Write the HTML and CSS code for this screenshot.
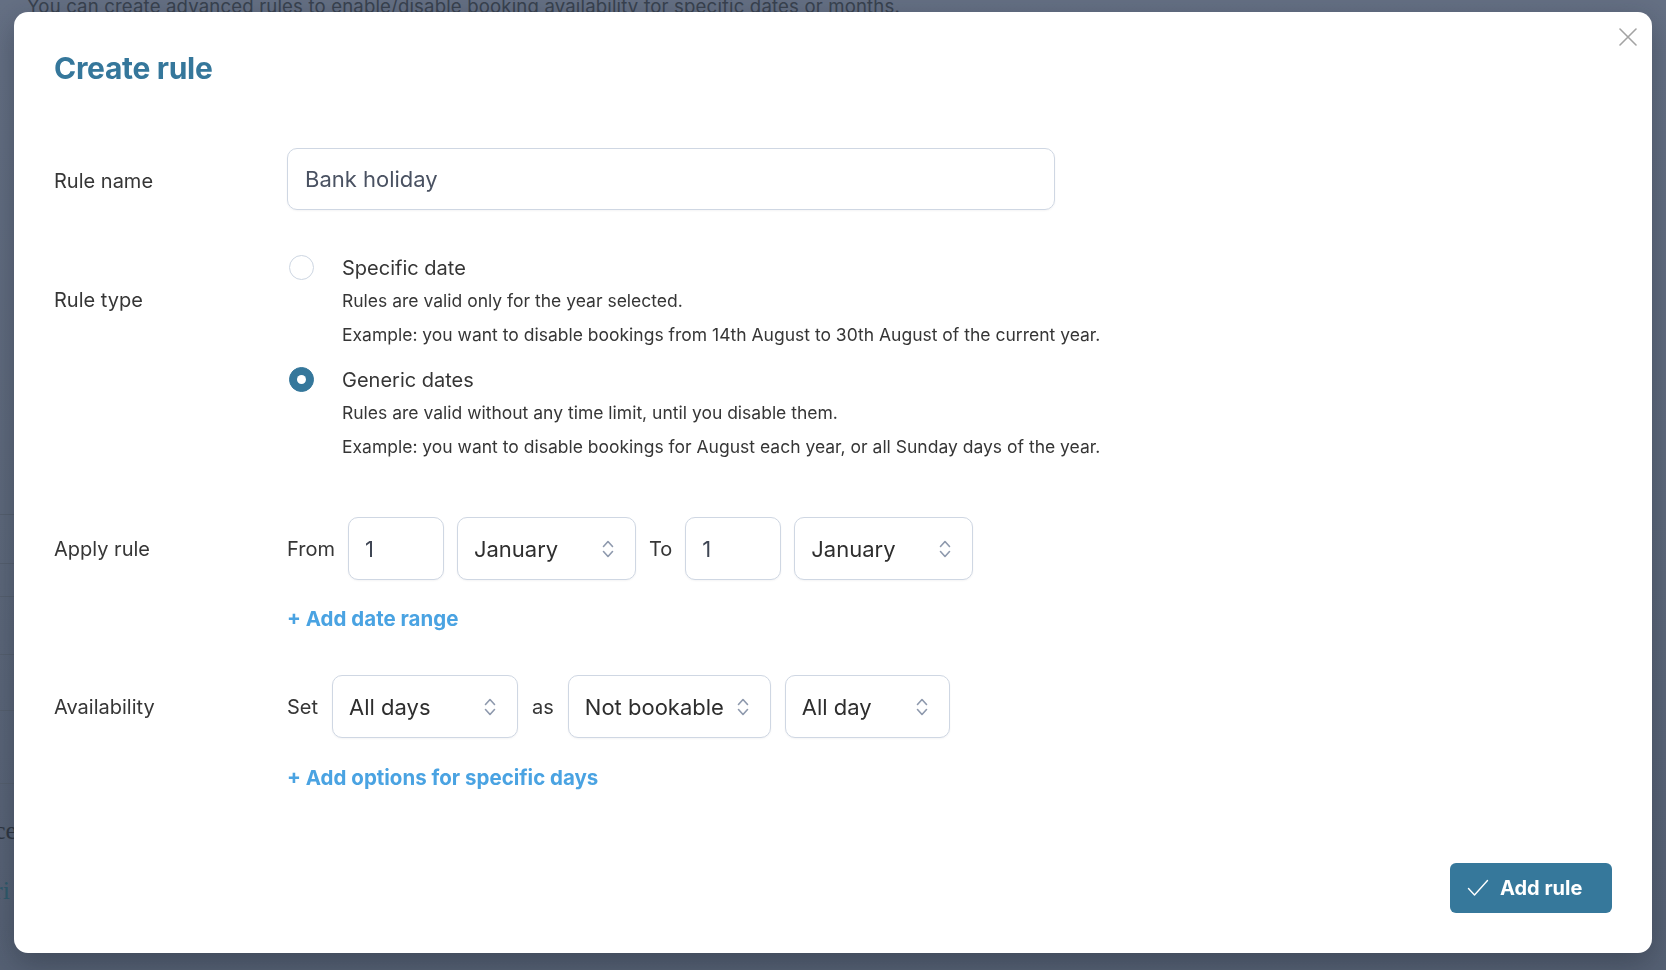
FILE: index.html
```html
<!DOCTYPE html>
<html lang="en">
<head>
<meta charset="utf-8">
<title>Create rule</title>
<link rel="stylesheet" href="styles.css">
</head>
<body>
<div class="page">
  <p class="page-intro">You can create advanced rules to enable/disable booking availability for specific dates or months.</p>
  <div class="page-side">
    <div class="side-line l1"></div>
    <div class="side-line l2"></div>
    <div class="side-line l3"></div>
    <div class="side-line l4"></div>
    <div class="side-line l5"></div>
    <div class="side-line l6"></div>
    <div class="side-text">ce</div>
    <div class="side-text link">ri</div>
  </div>
</div>

<div class="modal">
  <button class="close" aria-label="Close">
    <svg width="18" height="18" viewBox="0 0 18 18"><path d="M1 1 L17 17 M17 1 L1 17" stroke="#a3a3a3" stroke-width="1.6" fill="none" stroke-linecap="round"/></svg>
  </button>

  <h1 class="title">Create rule</h1>

  <div class="row row-name">
    <label class="label">Rule name</label>
    <div class="field"><div class="text-input">Bank holiday</div></div>
  </div>

  <div class="row row-type">
    <div class="label label-type">Rule type</div>
    <div class="options">
      <div class="option">
        <span class="radio"></span>
        <div class="option-body">
          <div class="option-title">Specific date</div>
          <p class="option-desc">Rules are valid only for the year selected.</p>
          <p class="option-desc">Example: you want to disable bookings from 14th August to 30th August of the current year.</p>
        </div>
      </div>
      <div class="option">
        <span class="radio checked"></span>
        <div class="option-body">
          <div class="option-title">Generic dates</div>
          <p class="option-desc">Rules are valid without any time limit, until you disable them.</p>
          <p class="option-desc">Example: you want to disable bookings for August each year, or all Sunday days of the year.</p>
        </div>
      </div>
    </div>
  </div>

  <div class="row row-apply">
    <div class="label">Apply rule</div>
    <div class="controls controls-apply">
      <span class="word">From</span>
      <div class="box num">1</div>
      <div class="box select w-month"><span>January</span><svg class="chev" width="14" height="22" viewBox="0 0 14 22"><path d="M2.5 8.5 L7 3.5 L11.5 8.5 M2.5 13.5 L7 18.5 L11.5 13.5" stroke="#8e99ad" stroke-width="1.6" fill="none" stroke-linecap="round" stroke-linejoin="round"/></svg></div>
      <span class="word">To</span>
      <div class="box num">1</div>
      <div class="box select w-month"><span>January</span><svg class="chev" width="14" height="22" viewBox="0 0 14 22"><path d="M2.5 8.5 L7 3.5 L11.5 8.5 M2.5 13.5 L7 18.5 L11.5 13.5" stroke="#8e99ad" stroke-width="1.6" fill="none" stroke-linecap="round" stroke-linejoin="round"/></svg></div>
    </div>
  </div>
  <div class="row-link"><a class="add-link">+ Add date range</a></div>

  <div class="row row-avail">
    <div class="label">Availability</div>
    <div class="controls">
      <span class="word">Set</span>
      <div class="box select w-days"><span>All days</span><svg class="chev" width="14" height="22" viewBox="0 0 14 22"><path d="M2.5 8.5 L7 3.5 L11.5 8.5 M2.5 13.5 L7 18.5 L11.5 13.5" stroke="#8e99ad" stroke-width="1.6" fill="none" stroke-linecap="round" stroke-linejoin="round"/></svg></div>
      <span class="word">as</span>
      <div class="box select w-book"><span>Not bookable</span><svg class="chev" width="14" height="22" viewBox="0 0 14 22"><path d="M2.5 8.5 L7 3.5 L11.5 8.5 M2.5 13.5 L7 18.5 L11.5 13.5" stroke="#8e99ad" stroke-width="1.6" fill="none" stroke-linecap="round" stroke-linejoin="round"/></svg></div>
      <div class="box select w-allday"><span>All day</span><svg class="chev" width="14" height="22" viewBox="0 0 14 22"><path d="M2.5 8.5 L7 3.5 L11.5 8.5 M2.5 13.5 L7 18.5 L11.5 13.5" stroke="#8e99ad" stroke-width="1.6" fill="none" stroke-linecap="round" stroke-linejoin="round"/></svg></div>
    </div>
  </div>
  <div class="row-link link-days"><a class="add-link">+ Add options for specific days</a></div>

  <div class="footer">
    <button class="primary">
      <svg width="22" height="18" viewBox="0 0 22 18"><path d="M1.5 9.5 L7.5 16 L20.5 1.5" stroke="#ffffff" stroke-width="1.4" fill="none" stroke-linecap="round" stroke-linejoin="round"/></svg>
      <span>Add rule</span>
    </button>
  </div>
</div>
</body>
</html>
```

FILE: styles.css
```css
* { box-sizing: border-box; }

html, body {
  margin: 0;
  height: 100%;
}

body {
  background: linear-gradient(180deg, #657084 0%, #5d687b 60%, #566174 100%);
  font-family: Inter, "Noto Sans", sans-serif;
  overflow: hidden;
}

.page {
  height: 100%;
  padding: 0;
}

.page-intro {
  margin: 0;
  padding: 0 0 0 27px;
  font-size: 18.6px;
  line-height: 18px;
  margin-top: -3px;
  color: #39424f;
  letter-spacing: 0.15px;
}

.page-side {
  width: 14px;
  display: flex;
  flex-direction: column;
}

.side-line {
  height: 1px;
  background: #56606f;
}
.l1 { margin-top: 499px; }
.l2 { margin-top: 48px; }
.l3 { margin-top: 32px; }
.l4 { margin-top: 57px; }
.l5 { margin-top: 55px; }
.l6 { margin-top: 72px; }

.side-text {
  font-family: "Liberation Serif", serif;
  font-size: 26px;
  line-height: 30px;
  color: #2f3742;
  margin-top: 32px;
  margin-left: -6px;
}
.side-text.link { color: #2f5b6d; margin-top: 30px; }

.modal {
  position: fixed;
  left: 14px;
  top: 12px;
  width: 1638px;
  height: 941px;
  background: #ffffff;
  border-radius: 14px;
  box-shadow: 0 10px 30px rgba(20, 28, 40, 0.35);
  padding: 36px 40px 40px 40px;
  display: flex;
  flex-direction: column;
}

.close {
  position: absolute;
  top: 16px;
  right: 15px;
  width: 18px;
  height: 18px;
  padding: 0;
  border: 0;
  background: none;
  display: flex;
}

.title {
  margin: 0;
  font-size: 30px;
  line-height: 40px;
  font-weight: 700;
  color: #35779b;
  letter-spacing: -0.3px;
}

.row {
  display: grid;
  grid-template-columns: 233px 1fr;
}

.label {
  font-size: 20px;
  line-height: 28px;
  color: #363636;
}

.row-name {
  margin-top: 60px;
  align-items: center;
}

.row-name .label { padding-top: 3px; }

.text-input {
  width: 768px;
  height: 62px;
  border: 1px solid #cfd7e3;
  border-radius: 10px;
  padding: 0 17px;
  display: flex;
  align-items: center;
  font-size: 22px;
  color: #4a5262;
  box-shadow: 0 1px 2px rgba(30, 40, 60, 0.05);
}

.row-type {
  margin-top: 44px;
}

.label-type {
  padding-top: 32px;
}

.options {
  display: flex;
  flex-direction: column;
  gap: 14px;
}

.option {
  display: flex;
  gap: 28px;
  align-items: flex-start;
}

.radio {
  width: 25px;
  height: 25px;
  margin-left: 2px;
  margin-top: 1px;
  border-radius: 50%;
  border: 1px solid #cdd6e2;
  background: #fff;
  flex: none;
  display: flex;
  align-items: center;
  justify-content: center;
}

.radio.checked {
  background: #35779b;
  border-color: #35779b;
}

.radio.checked::after {
  content: "";
  width: 9px;
  height: 9px;
  border-radius: 50%;
  background: #fff;
}

.option-title {
  font-size: 20px;
  line-height: 28px;
  color: #363636;
}

.option-desc {
  margin: 0;
  font-size: 17.5px;
  line-height: 34px;
  color: #363636;
}

.option-title + .option-desc { margin-top: 2px; }

.row-apply {
  margin-top: 53px;
  align-items: center;
}

.controls {
  display: flex;
  align-items: center;
  gap: 14px;
}

.controls-apply { gap: 13px; }

.word {
  font-size: 20px;
  color: #363636;
}

.box {
  height: 63px;
  border: 1px solid #cfd7e3;
  border-radius: 10px;
  display: flex;
  align-items: center;
  padding: 0 16px;
  font-size: 22px;
  color: #2e2e2e;
  background: #fff;
  box-shadow: 0 1px 2px rgba(30, 40, 60, 0.05);
}

.num {
  width: 96px;
  color: #3f4654;
}

.select {
  justify-content: space-between;
  padding-right: 20px;
}

.w-month { width: 179px; }
.w-days { width: 186px; }
.w-book { width: 203px; }
.w-allday { width: 165px; }

.chev { flex: none; }

.row-link {
  margin-top: 25px;
  padding-left: 233px;
  line-height: 28px;
}

.add-link {
  font-size: 20.5px;
  font-weight: 700;
  color: #4aa3e2;
  cursor: pointer;
}

.row-avail {
  margin-top: 41px;
  align-items: center;
}

.link-days {
  margin-top: 26px;
}

.footer {
  margin-top: auto;
  display: flex;
  justify-content: flex-end;
}

.primary {
  height: 50px;
  width: 162px;
  border: 0;
  border-radius: 6px;
  background: #36789b;
  color: #fff;
  font-family: Inter, "Noto Sans", sans-serif;
  font-size: 20px;
  font-weight: 700;
  display: flex;
  align-items: center;
  gap: 11px;
  padding: 0 0 0 17px;
}
```
